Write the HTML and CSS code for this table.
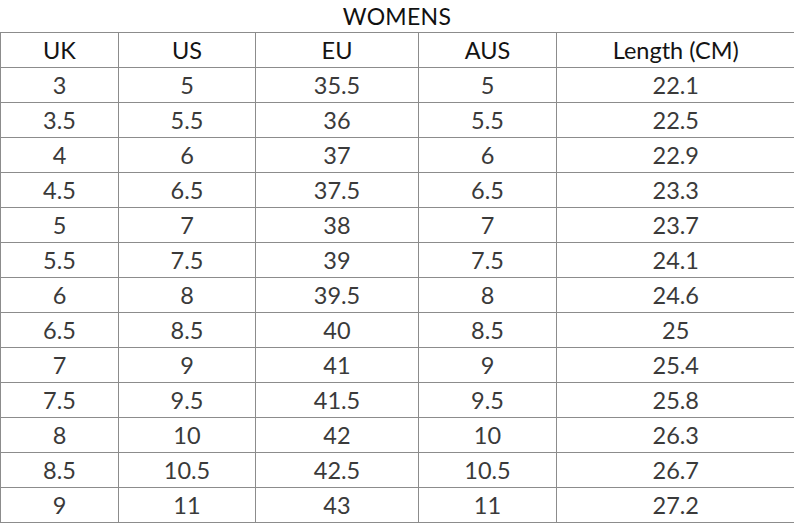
FILE: index.html
```html
<!DOCTYPE html>
<html>
<head>
<meta charset="utf-8">
<link rel="stylesheet" href="styles.css">
</head>
<body>
<div class="sheet">
  <div class="title">WOMENS</div>
  <table class="sizes">
    <colgroup>
      <col class="c1"><col class="c2"><col class="c3"><col class="c4"><col class="c5">
    </colgroup>
    <thead>
      <tr><th>UK</th><th>US</th><th>EU</th><th>AUS</th><th>Length (CM)</th></tr>
    </thead>
    <tbody>
      <tr><td>3</td><td>5</td><td>35.5</td><td>5</td><td>22.1</td></tr>
      <tr><td>3.5</td><td>5.5</td><td>36</td><td>5.5</td><td>22.5</td></tr>
      <tr><td>4</td><td>6</td><td>37</td><td>6</td><td>22.9</td></tr>
      <tr><td>4.5</td><td>6.5</td><td>37.5</td><td>6.5</td><td>23.3</td></tr>
      <tr><td>5</td><td>7</td><td>38</td><td>7</td><td>23.7</td></tr>
      <tr><td>5.5</td><td>7.5</td><td>39</td><td>7.5</td><td>24.1</td></tr>
      <tr><td>6</td><td>8</td><td>39.5</td><td>8</td><td>24.6</td></tr>
      <tr><td>6.5</td><td>8.5</td><td>40</td><td>8.5</td><td>25</td></tr>
      <tr><td>7</td><td>9</td><td>41</td><td>9</td><td>25.4</td></tr>
      <tr><td>7.5</td><td>9.5</td><td>41.5</td><td>9.5</td><td>25.8</td></tr>
      <tr><td>8</td><td>10</td><td>42</td><td>10</td><td>26.3</td></tr>
      <tr><td>8.5</td><td>10.5</td><td>42.5</td><td>10.5</td><td>26.7</td></tr>
      <tr><td>9</td><td>11</td><td>43</td><td>11</td><td>27.2</td></tr>
    </tbody>
  </table>
</div>
</body>
</html>
```
FILE: styles.css
```css
html, body {
  margin: 0;
  padding: 0;
  background: #fff;
}
.sheet {
  width: 794px;
  height: 530px;
  overflow: hidden;
  font-family: Lato, "Open Sans", sans-serif;
}
.title {
  height: 32px;
  text-align: center;
  font-size: 23px;
  line-height: 32px;
  color: #111;
  letter-spacing: 0.3px;
}
.sizes {
  border-collapse: collapse;
  table-layout: fixed;
  width: 794px;
}
.c1 { width: 118px; }
.c2 { width: 137px; }
.c3 { width: 163px; }
.c4 { width: 138px; }
.c5 { width: 238px; }
.sizes th,
.sizes td {
  height: 34px;
  padding: 0;
  text-align: center;
  vertical-align: middle;
  border: 1px solid #8c8c8c;
  font-size: 23.5px;
  line-height: 34px;
}
.sizes th:last-child,
.sizes td:last-child {
  border-right: none;
}
.sizes th {
  font-weight: normal;
  color: #141414;
}
.sizes td {
  color: #3a3a3a;
}
```
